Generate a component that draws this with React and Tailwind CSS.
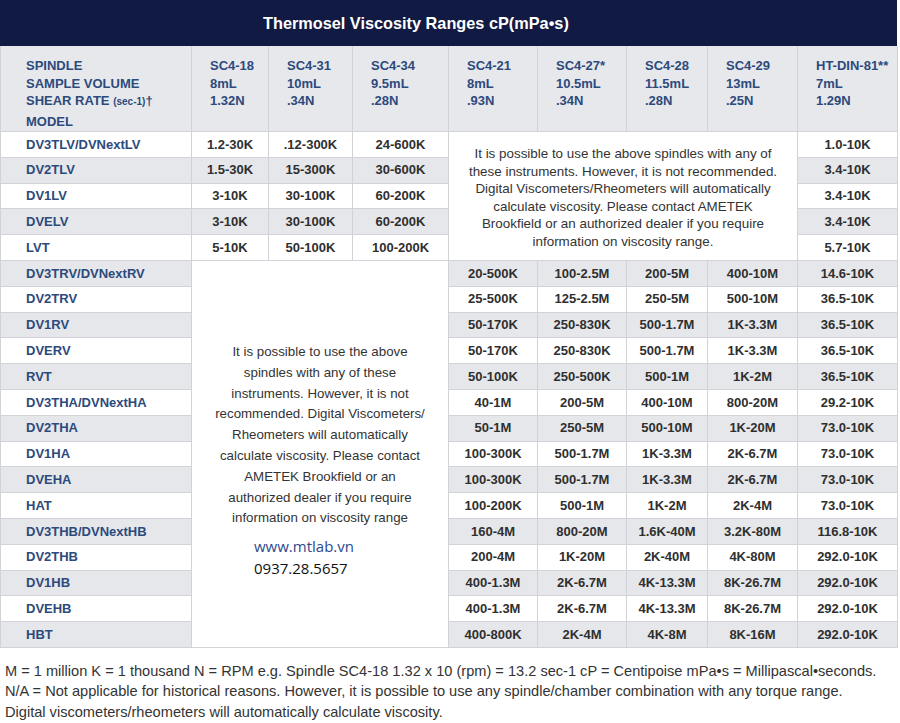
const heads = [
  ['SC4-18', '8mL', '1.32N'],
  ['SC4-31', '10mL', '.34N'],
  ['SC4-34', '9.5mL', '.28N'],
  ['SC4-21', '8mL', '.93N'],
  ['SC4-27*', '10.5mL', '.34N'],
  ['SC4-28', '11.5mL', '.28N'],
  ['SC4-29', '13mL', '.25N'],
  ['HT-DIN-81**', '7mL', '1.29N'],
];

const lvRows = [
  ['DV3TLV/DVNextLV', '1.2-30K', '.12-300K', '24-600K', '1.0-10K'],
  ['DV2TLV', '1.5-30K', '15-300K', '30-600K', '3.4-10K'],
  ['DV1LV', '3-10K', '30-100K', '60-200K', '3.4-10K'],
  ['DVELV', '3-10K', '30-100K', '60-200K', '3.4-10K'],
  ['LVT', '5-10K', '50-100K', '100-200K', '5.7-10K'],
];

const otherRows = [
  ['DV3TRV/DVNextRV', '20-500K', '100-2.5M', '200-5M', '400-10M', '14.6-10K'],
  ['DV2TRV', '25-500K', '125-2.5M', '250-5M', '500-10M', '36.5-10K'],
  ['DV1RV', '50-170K', '250-830K', '500-1.7M', '1K-3.3M', '36.5-10K'],
  ['DVERV', '50-170K', '250-830K', '500-1.7M', '1K-3.3M', '36.5-10K'],
  ['RVT', '50-100K', '250-500K', '500-1M', '1K-2M', '36.5-10K'],
  ['DV3THA/DVNextHA', '40-1M', '200-5M', '400-10M', '800-20M', '29.2-10K'],
  ['DV2THA', '50-1M', '250-5M', '500-10M', '1K-20M', '73.0-10K'],
  ['DV1HA', '100-300K', '500-1.7M', '1K-3.3M', '2K-6.7M', '73.0-10K'],
  ['DVEHA', '100-300K', '500-1.7M', '1K-3.3M', '2K-6.7M', '73.0-10K'],
  ['HAT', '100-200K', '500-1M', '1K-2M', '2K-4M', '73.0-10K'],
  ['DV3THB/DVNextHB', '160-4M', '800-20M', '1.6K-40M', '3.2K-80M', '116.8-10K'],
  ['DV2THB', '200-4M', '1K-20M', '2K-40M', '4K-80M', '292.0-10K'],
  ['DV1HB', '400-1.3M', '2K-6.7M', '4K-13.3M', '8K-26.7M', '292.0-10K'],
  ['DVEHB', '400-1.3M', '2K-6.7M', '4K-13.3M', '8K-26.7M', '292.0-10K'],
  ['HBT', '400-800K', '2K-4M', '4K-8M', '8K-16M', '292.0-10K'],
];

const line = 'border-r border-b border-[#d2d3d8]';

function Label({ text, shade }) {
  return (
    <div className={`${line} ${shade ? 'bg-[#e6e7eb]' : 'bg-white'} flex items-center pl-[25px] text-[13px] font-bold text-[#2d4a7c]`}>
      {text}
    </div>
  );
}

function Cell({ text, shade }) {
  return (
    <div className={`${line} ${shade ? 'bg-[#e6e7eb]' : 'bg-white'} flex items-center justify-center text-[13px] font-bold text-[#2f2f2f]`}>
      {text}
    </div>
  );
}

export default function App() {
  return (
    <div className="w-[900px] h-[723px] bg-white font-['Liberation_Sans',Arial,sans-serif]">
      <div className="w-[897px]">
        <div className="h-[46px] bg-[#111a42] flex items-center pl-[263px] text-[16.3px] font-bold text-white">
          Thermosel Viscosity Ranges cP(mPa•s)
        </div>

        <div className="grid grid-cols-[191px_77px_84px_96px_89px_89px_81px_90px_100px] grid-rows-[86px_repeat(20,25.8px)] border-l border-[#d2d3d8]">
          <div className={`${line} bg-[#e7e8ec] pl-[25px] pt-[11px] text-[13px] font-bold leading-[17.5px] text-[#2d4a7c]`}>
            <div>SPINDLE</div>
            <div>SAMPLE VOLUME</div>
            <div>
              SHEAR RATE <span className="text-[10px]">(sec-1)</span>†
            </div>
            <div className="mt-[2px]">MODEL</div>
          </div>
          {heads.map((h, i) => (
            <div key={i} className={`${line} bg-[#e7e8ec] pl-[18px] pt-[11px] text-[13px] font-bold leading-[17.5px] text-[#2d4a7c]`}>
              {h.map((t) => (
                <div key={t}>{t}</div>
              ))}
            </div>
          ))}

          {lvRows.map((r, i) => {
            const shade = i % 2 === 1;
            return [
              <Label key={`l${i}`} text={r[0]} shade={shade} />,
              <Cell key={`a${i}`} text={r[1]} shade={shade} />,
              <Cell key={`b${i}`} text={r[2]} shade={shade} />,
              <Cell key={`c${i}`} text={r[3]} shade={shade} />,
              i === 0 ? (
                <div key="note1" className={`${line} col-span-4 row-span-5 bg-white pt-[13px] text-center text-[13.4px] leading-[17.5px] text-[#333]`}>
                  It is possible to use the above spindles with any of
                  <br />
                  these instruments. However, it is not recommended.
                  <br />
                  Digital Viscometers/Rheometers will automatically
                  <br />
                  calculate viscosity. Please contact AMETEK
                  <br />
                  Brookfield or an authorized dealer if you require
                  <br />
                  information on viscosity range.
                </div>
              ) : null,
              <Cell key={`d${i}`} text={r[4]} shade={shade} />,
            ];
          })}

          {otherRows.map((r, i) => {
            const shade = i % 2 === 0;
            return [
              <Label key={`ol${i}`} text={r[0]} shade={shade} />,
              i === 0 ? (
                <div key="note2" className={`${line} col-span-3 row-span-15 bg-white pt-[81px]`}>
                  <p className="text-center text-[13.3px] leading-[20.8px] text-[#333]">
                    It is possible to use the above
                    <br />
                    spindles with any of these
                    <br />
                    instruments. However, it is not
                    <br />
                    recommended. Digital Viscometers/
                    <br />
                    Rheometers will automatically
                    <br />
                    calculate viscosity. Please contact
                    <br />
                    AMETEK Brookfield or an
                    <br />
                    authorized dealer if you require
                    <br />
                    information on viscosity range
                  </p>
                  <div className="mt-[6px] pl-[62px] font-['Open_Sans',sans-serif] text-[15px] leading-[22px]">
                    <div className="text-[#2e4a8c]">www.mtlab.vn</div>
                    <div className="text-[#111]">0937.28.5657</div>
                  </div>
                </div>
              ) : null,
              ...r.slice(1).map((t, j) => <Cell key={`o${i}-${j}`} text={t} shade={shade} />),
            ];
          })}
        </div>
      </div>

      <div className="mt-[13px] pl-[5px] text-[14.6px] leading-[20.5px] text-[#333]">
        <div>M = 1 million K = 1 thousand N = RPM e.g. Spindle SC4-18 1.32 x 10 (rpm) = 13.2 sec-1 cP = Centipoise mPa•s = Millipascal•seconds.</div>
        <div>N/A = Not applicable for historical reasons. However, it is possible to use any spindle/chamber combination with any torque range.</div>
        <div>Digital viscometers/rheometers will automatically calculate viscosity.</div>
      </div>
    </div>
  );
}
